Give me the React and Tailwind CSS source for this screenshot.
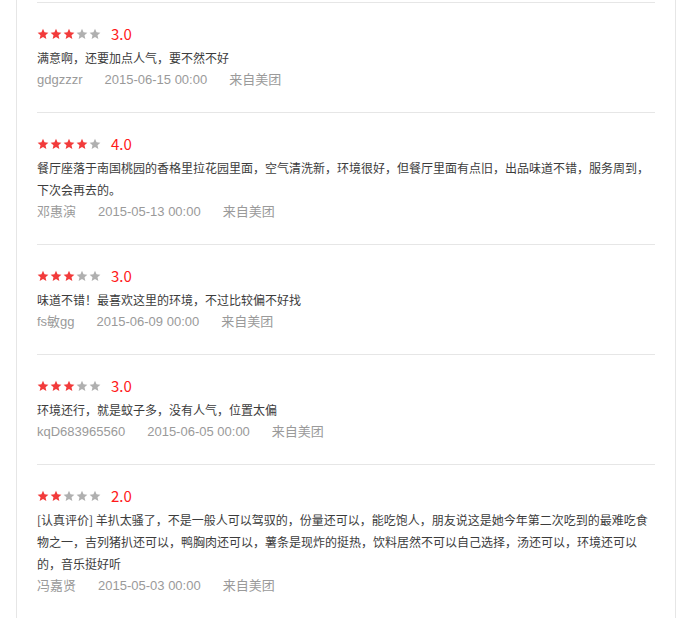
import React from "react";

const reviews = [
  { score: 3, text: "满意啊，还要加点人气，要不然不好", user: "gdgzzzr", date: "2015-06-15 00:00" },
  { score: 4, text: "餐厅座落于南国桃园的香格里拉花园里面，空气清洗新，环境很好，但餐厅里面有点旧，出品味道不错，服务周到，下次会再去的。", user: "邓惠演", date: "2015-05-13 00:00" },
  { score: 3, text: "味道不错！最喜欢这里的环境，不过比较偏不好找", user: "fs敏gg", date: "2015-06-09 00:00" },
  { score: 3, text: "环境还行，就是蚊子多，没有人气，位置太偏", user: "kqD683965560", date: "2015-06-05 00:00" },
  { score: 2, text: "[认真评价] 羊扒太骚了，不是一般人可以驾驭的，份量还可以，能吃饱人，朋友说这是她今年第二次吃到的最难吃食物之一，吉列猪扒还可以，鸭胸肉还可以，薯条是现炸的挺热，饮料居然不可以自己选择，汤还可以，环境还可以的，音乐挺好听", user: "冯嘉贤", date: "2015-05-03 00:00" },
];

function Star({ on }) {
  return (
    <svg width="12" height="12" viewBox="0 0 24 24" className="block">
      <polygon
        points="12,1.5 15.1,8.6 22.8,9.3 17,14.4 18.7,22 12,18 5.3,22 7,14.4 1.2,9.3 8.9,8.6"
        fill={on ? "#f23b3b" : "#b0b0b0"}
      />
    </svg>
  );
}

function Review({ r }) {
  return (
    <div className="border-t border-[#e6e6e6] pt-[19px] pb-[22px]">
      <div className="flex h-[24px] items-center">
        <div className="flex gap-[1px]">
          {[0, 1, 2, 3, 4].map((i) => (
            <Star key={i} on={i < r.score} />
          ))}
        </div>
        <span className="ml-[10px] text-[15px] leading-[24px] text-[#ff1a1a]">{r.score}.0</span>
      </div>
      <p className="mt-[1px] text-[12px] leading-[22px] text-[#3c3c3c]">{r.text}</p>
      <div
        className="flex text-[13px] leading-[21px] text-[#9a9a9a]"
        style={{ fontFamily: '"Liberation Sans", "Noto Sans CJK SC", sans-serif' }}
      >
        <span className="mr-[22px]">{r.user}</span>
        <span className="mr-[22px]">{r.date}</span>
        <span>来自美团</span>
      </div>
    </div>
  );
}

export default function App() {
  return (
    <div
      className="min-h-[618px] bg-white"
      style={{ fontFamily: '"Noto Sans CJK SC", "Noto Sans", sans-serif' }}
    >
      <div className="ml-[16px] w-[660px] min-h-[618px] border-l border-r border-[#e6e6e6] px-5 pt-[2px]">
        {reviews.map((r, i) => (
          <Review key={i} r={r} />
        ))}
      </div>
    </div>
  );
}
